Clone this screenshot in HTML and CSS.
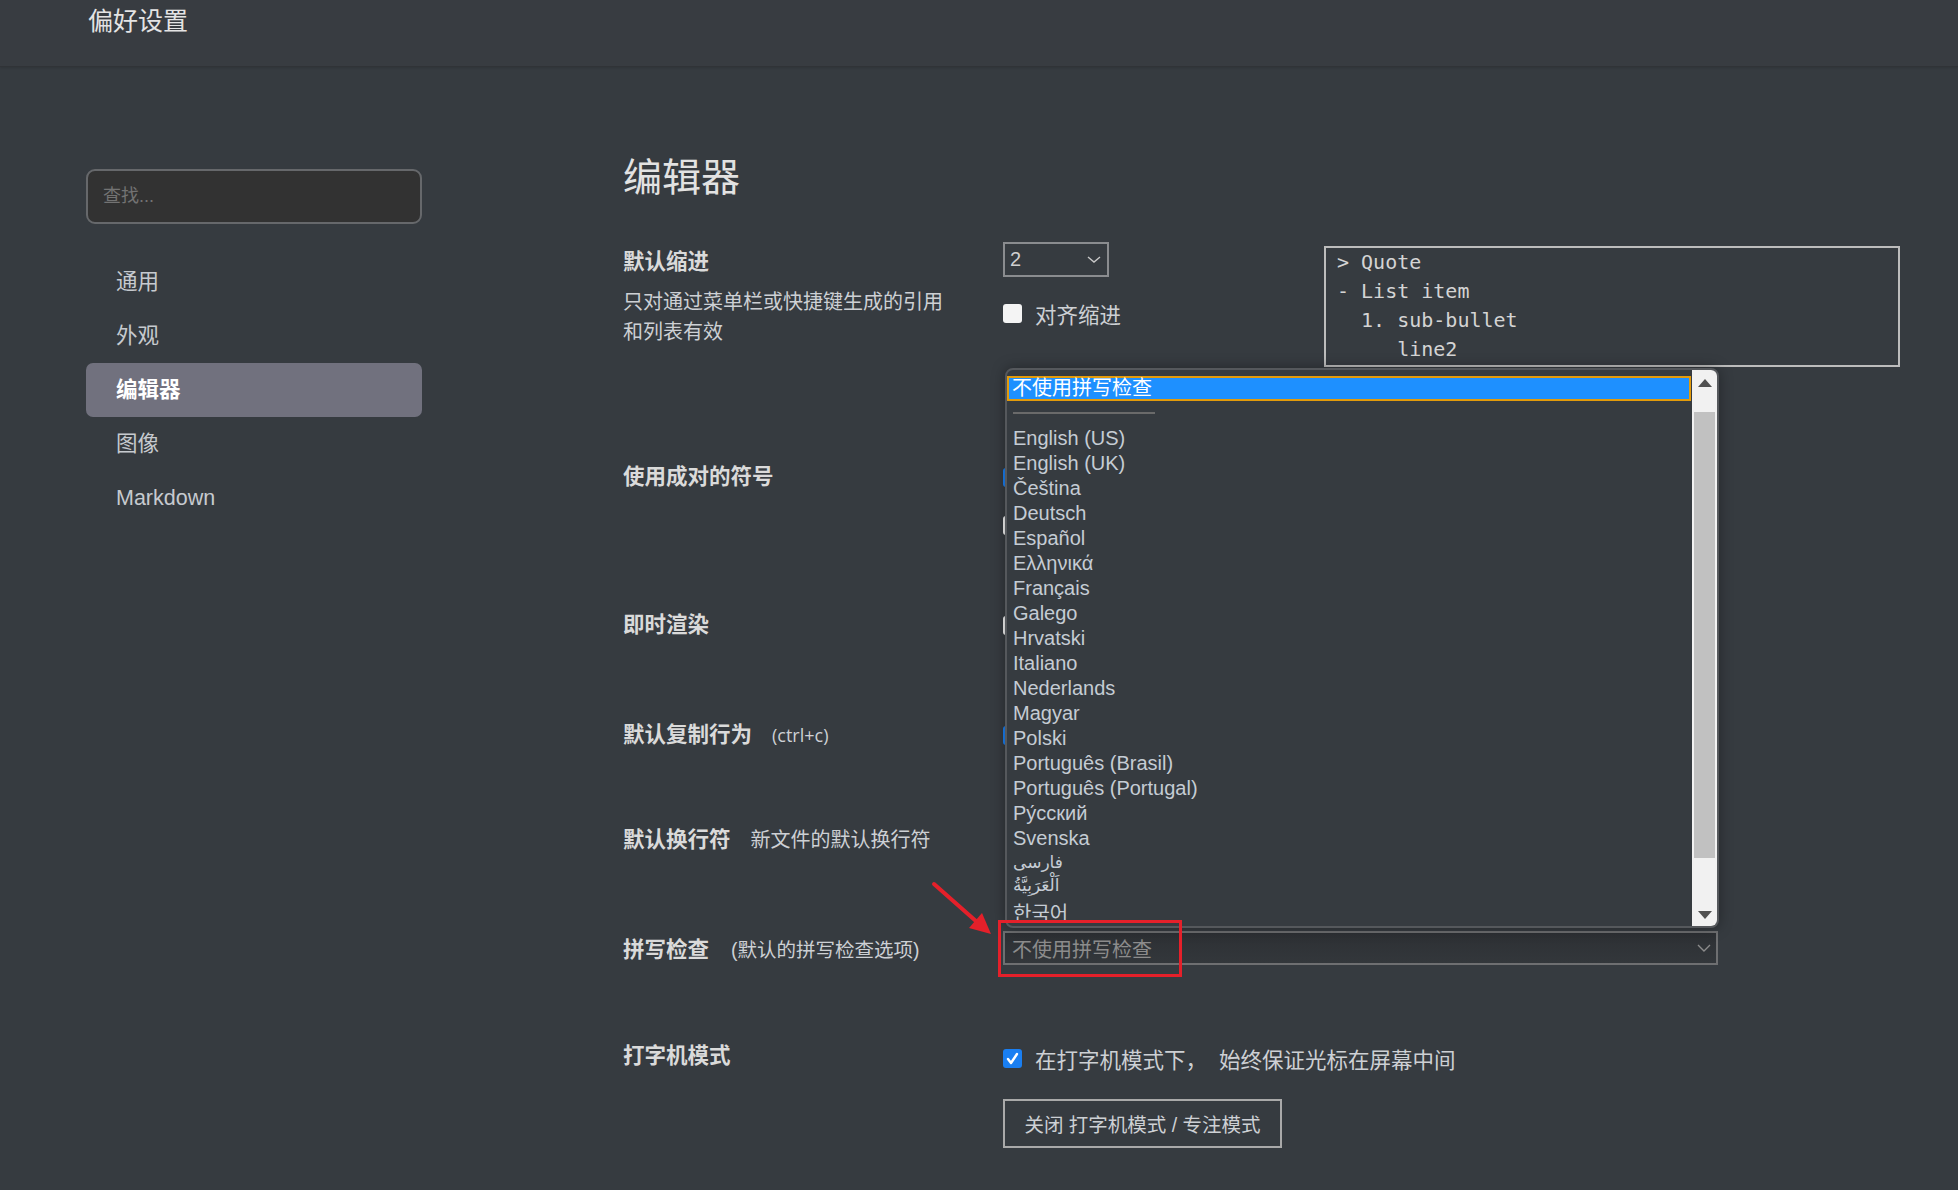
FILE: index.html
```html
<!DOCTYPE html>
<html lang="zh-CN">
<head>
<meta charset="utf-8">
<title>偏好设置</title>
<link rel="stylesheet" href="styles.css">
</head>
<body>
<header class="topbar"><h1 class="title">偏好设置</h1></header>
<div class="layout">
  <aside class="sidebar">
    <div class="search">查找...</div>
    <nav class="nav">
      <div class="nav-item">通用</div>
      <div class="nav-item">外观</div>
      <div class="nav-item active">编辑器</div>
      <div class="nav-item">图像</div>
      <div class="nav-item">Markdown</div>
    </nav>
  </aside>
  <main class="main">
    <h2 class="heading">编辑器</h2>

    <section class="row row-indent">
      <div class="label-col label-col-indent">
        <div class="label">默认缩进</div>
        <div class="desc">只对通过菜单栏或快捷键生成的引用<br>和列表有效</div>
      </div>
      <div class="ctl-col ctl-indent">
        <div class="indent-left">
          <div class="select-small"><span>2</span>
            <svg class="chev-small" width="14" height="7" viewBox="0 0 14 7"><polyline points="1,1 7,6 13,1" fill="none" stroke="#c8c8c8" stroke-width="1.4"/></svg>
          </div>
          <div class="check-line"><span class="box"></span><span class="check-text">对齐缩进</span></div>
        </div>
        <pre class="quote-box">&gt; Quote
- List item
  1. sub-bullet
     line2</pre>
      </div>
    </section>

    <section class="row row-pairs">
      <div class="label-col"><div class="label">使用成对的符号</div></div>
      <div class="ctl-col">
        <div class="check-line"><span class="box on"></span></div>
        <div class="check-line second"><span class="box"></span></div>
      </div>
    </section>

    <section class="row row-render">
      <div class="label-col"><div class="label">即时渲染</div></div>
      <div class="ctl-col"><div class="check-line"><span class="box"></span></div></div>
    </section>

    <section class="row row-copy">
      <div class="label-col"><div class="label">默认复制行为<span class="aux aux-latin">(ctrl+c)</span></div></div>
      <div class="ctl-col"><div class="check-line"><span class="box on"></span></div></div>
    </section>

    <section class="row row-eol">
      <div class="label-col"><div class="label">默认换行符<span class="aux aux-desc">新文件的默认换行符</span></div></div>
      <div class="ctl-col"></div>
    </section>

    <section class="row row-spell">
      <div class="label-col label-col-spell"><div class="label">拼写检查<span class="aux aux-small">(默认的拼写检查选项)</span></div></div>
      <div class="ctl-col">
        <div class="select-wide">
          <span class="select-value">不使用拼写检查</span>
          <svg class="chev-wide" width="14" height="8" viewBox="0 0 14 8"><polyline points="1,1 7,7 13,1" fill="none" stroke="#8c8c8c" stroke-width="1.4"/></svg>

          <div class="popup">
            <div class="popup-list">
              <div class="opt-selected">不使用拼写检查</div>
              <div class="opt-sep"></div>
              <div class="opt">English (US)</div>
              <div class="opt">English (UK)</div>
              <div class="opt">Čeština</div>
              <div class="opt">Deutsch</div>
              <div class="opt">Español</div>
              <div class="opt">Ελληνικά</div>
              <div class="opt">Français</div>
              <div class="opt">Galego</div>
              <div class="opt">Hrvatski</div>
              <div class="opt">Italiano</div>
              <div class="opt">Nederlands</div>
              <div class="opt">Magyar</div>
              <div class="opt">Polski</div>
              <div class="opt">Português (Brasil)</div>
              <div class="opt">Português (Portugal)</div>
              <div class="opt">Ру́сский</div>
              <div class="opt">Svenska</div>
              <div class="opt opt-ar" dir="rtl">فارسی</div>
              <div class="opt opt-ar" dir="rtl">اَلْعَرَبِيَّةُ</div>
              <div class="opt opt-ko">한국어</div>
            </div>
            <div class="scrollbar">
              <div class="sb-btn sb-up"><svg width="14" height="8" viewBox="0 0 14 8"><polygon points="0,8 7,0 14,8" fill="#505050"/></svg></div>
              <div class="sb-track"><div class="sb-thumb"></div></div>
              <div class="sb-btn sb-down"><svg width="14" height="8" viewBox="0 0 14 8"><polygon points="0,0 14,0 7,8" fill="#505050"/></svg></div>
            </div>
          </div>

          <div class="mark-rect"></div>
          <svg class="mark-arrow" width="70" height="60" viewBox="0 0 70 60">
            <line x1="5" y1="4" x2="48" y2="42" stroke="#e5202a" stroke-width="4" stroke-linecap="round"/>
            <polygon points="62,54 40,48 53,33" fill="#e5202a"/>
          </svg>
        </div>
      </div>
    </section>

    <section class="row row-typewriter">
      <div class="label-col"><div class="label">打字机模式</div></div>
      <div class="ctl-col">
        <div class="check-line tw-line">
          <span class="box on"><svg width="19" height="19" viewBox="0 0 19 19"><polyline points="5,10 8,14 14,5" fill="none" stroke="#fff" stroke-width="2.4" stroke-linecap="round" stroke-linejoin="round"/></svg></span>
          <span class="check-text">在打字机模式下，  始终保证光标在屏幕中间</span>
        </div>
        <div class="btn">关闭 打字机模式 / 专注模式</div>
      </div>
    </section>
  </main>
</div>
</body>
</html>
```

FILE: styles.css
```css
html, body {
  margin: 0;
  padding: 0;
}

body {
  width: 1958px;
  height: 1190px;
  overflow: hidden;
  background: #363b40;
  color: #c8cdd2;
  font-family: "Liberation Sans", "Noto Sans CJK SC", sans-serif;
}

.topbar {
  height: 67px;
  box-sizing: border-box;
  background: #383c41;
  border-bottom: 1px solid #303337;
  box-shadow: 0 1px 2px rgba(0, 0, 0, 0.12);
  padding-left: 88px;
}

.title {
  margin: 0;
  font-size: 25px;
  font-weight: normal;
  line-height: 42px;
  color: #e4e4e4;
}

.layout {
  display: flex;
  padding-left: 86px;
}

/* Sidebar */
.sidebar {
  width: 336px;
  padding-top: 102px;
  flex: none;
}

.search {
  height: 55px;
  box-sizing: border-box;
  border: 2px solid #66686b;
  border-radius: 9px;
  background: #323232;
  padding-left: 15px;
  font-size: 18px;
  line-height: 51px;
  color: #737373;
}

.nav {
  margin-top: 31px;
}

.nav-item {
  height: 54px;
  line-height: 54px;
  padding-left: 30px;
  font-size: 21.5px;
  color: #c6cacf;
  border-radius: 7px;
}

.nav-item.active {
  background: #71717e;
  color: #ffffff;
  font-weight: bold;
}

/* Main */
.main {
  margin-left: 201px;
  padding-top: 86px;
  flex: 1;
}

.heading {
  margin: 0 0 39px;
  font-size: 39px;
  line-height: 50px;
  font-weight: normal;
  color: #e2e2e2;
}

.row {
  display: flex;
}

.row-indent { height: 220px; }
.row-pairs { height: 148px; }
.row-render { height: 110px; }
.row-copy { height: 105px; }
.row-eol { height: 106px; }
.row-spell { height: 110px; }

.label-col {
  width: 380px;
  flex: none;
}

.label-col-indent { padding-top: 5px; }
.label-col-spell { padding-top: 4px; }

.label {
  font-size: 21.5px;
  line-height: 30px;
  font-weight: bold;
  color: #dadada;
  white-space: nowrap;
}

.aux {
  font-weight: normal;
  margin-left: 20px;
  color: #cdd0d4;
}

.aux-latin {
  font-family: "Open Sans", "Liberation Sans", sans-serif;
  font-size: 18px;
}

.aux-desc { font-size: 20px; }
.aux-small { font-size: 19.5px; margin-left: 22px; }

.desc {
  margin-top: 10px;
  font-size: 20px;
  line-height: 30px;
  color: #cdd0d4;
}

.ctl-col {
  flex: 1;
}

.ctl-indent {
  display: flex;
}

.indent-left {
  width: 321px;
  flex: none;
}

.select-small {
  width: 106px;
  height: 35px;
  box-sizing: border-box;
  border: 2px solid #8a8c8f;
  display: flex;
  align-items: center;
  justify-content: space-between;
  padding: 0 6px 0 5px;
  font-size: 20px;
  color: #cfcfcf;
}

.check-line {
  display: flex;
  align-items: center;
  height: 30px;
  margin-top: 21px;
}

.row-pairs .check-line,
.row-render .check-line,
.row-copy .check-line {
  margin-top: 0;
}

.row-pairs .check-line.second {
  margin-top: 18px;
}

.box {
  width: 19px;
  height: 19px;
  border-radius: 3px;
  background: #f4f4f4;
  flex: none;
  display: flex;
}

.box.on {
  background: #1a7ff2;
}

.check-text {
  margin-left: 13px;
  font-size: 21.5px;
  color: #cdd0d4;
  white-space: pre;
}

.quote-box {
  margin: 4px 0 0;
  width: 576px;
  height: 121px;
  box-sizing: border-box;
  border: 2px solid #bcbcbc;
  padding: 0 11px;
  font-family: "DejaVu Sans Mono", "Liberation Mono", monospace;
  font-size: 20px;
  line-height: 29px;
  color: #d4d4d4;
}

/* Spell check select + popup */
.select-wide {
  position: relative;
  width: 715px;
  height: 34px;
  box-sizing: border-box;
  border: 2px solid #6e6f71;
  background: linear-gradient(#2d3034, #33373b);
  display: flex;
  align-items: center;
  justify-content: space-between;
  padding: 0 5px 0 7px;
}

.select-value {
  font-size: 20px;
  color: #8c8c8c;
}

.popup {
  position: absolute;
  left: 0;
  right: -3px;
  bottom: calc(100% + 5px);
  height: 560px;
  box-sizing: border-box;
  border: 2px solid #55585c;
  border-radius: 8px;
  background: #363b40;
  overflow: hidden;
  display: flex;
  box-shadow: 0 0 14px rgba(0, 0, 0, 0.35);
  z-index: 10;
}

.popup-list {
  flex: 1;
  padding-top: 6px;
  overflow: hidden;
  margin-right: 1px;
}

.opt-selected {
  height: 25px;
  box-sizing: border-box;
  border: 2px solid #e39b0b;
  background: #1e90ff;
  color: #ffffff;
  font-size: 20px;
  line-height: 21px;
  padding-left: 3px;
}

.opt-sep {
  margin: 11px 0 12px 6px;
  width: 142px;
  height: 2px;
  background: #6a6a6a;
}

.opt {
  padding-left: 6px;
  font-size: 20px;
  line-height: 25px;
  color: #c5ccd4;
  white-space: nowrap;
}

.opt-ar {
  font-family: "DejaVu Sans", sans-serif;
  font-size: 17px;
  line-height: 23px;
  text-align: left;
}

.opt-ko {
  font-family: "Noto Sans CJK KR", sans-serif;
  line-height: 32px;
}

.scrollbar {
  width: 25px;
  flex: none;
  background: #f1f1f1;
  display: flex;
  flex-direction: column;
}

.sb-btn {
  display: flex;
  align-items: center;
  justify-content: center;
  flex: none;
}

.sb-up { height: 26px; }
.sb-down { height: 22px; }

.sb-track {
  flex: 1;
  padding: 16px 2px 0;
}

.sb-thumb {
  height: 446px;
  background: #c1c1c1;
}

.mark-rect {
  position: absolute;
  left: -7px;
  top: -13px;
  width: 184px;
  height: 57px;
  box-sizing: border-box;
  border: 3px solid #e5202a;
  z-index: 20;
}

.mark-arrow {
  position: absolute;
  left: -76px;
  top: -53px;
  z-index: 20;
}

/* Typewriter */
.tw-line {
  margin-top: 2px;
}

.btn {
  margin-top: 26px;
  width: 279px;
  height: 49px;
  box-sizing: border-box;
  border: 2px solid #a9a9a9;
  display: flex;
  align-items: center;
  justify-content: center;
  font-size: 19.5px;
  color: #cdd0d4;
  white-space: pre;
}
```
